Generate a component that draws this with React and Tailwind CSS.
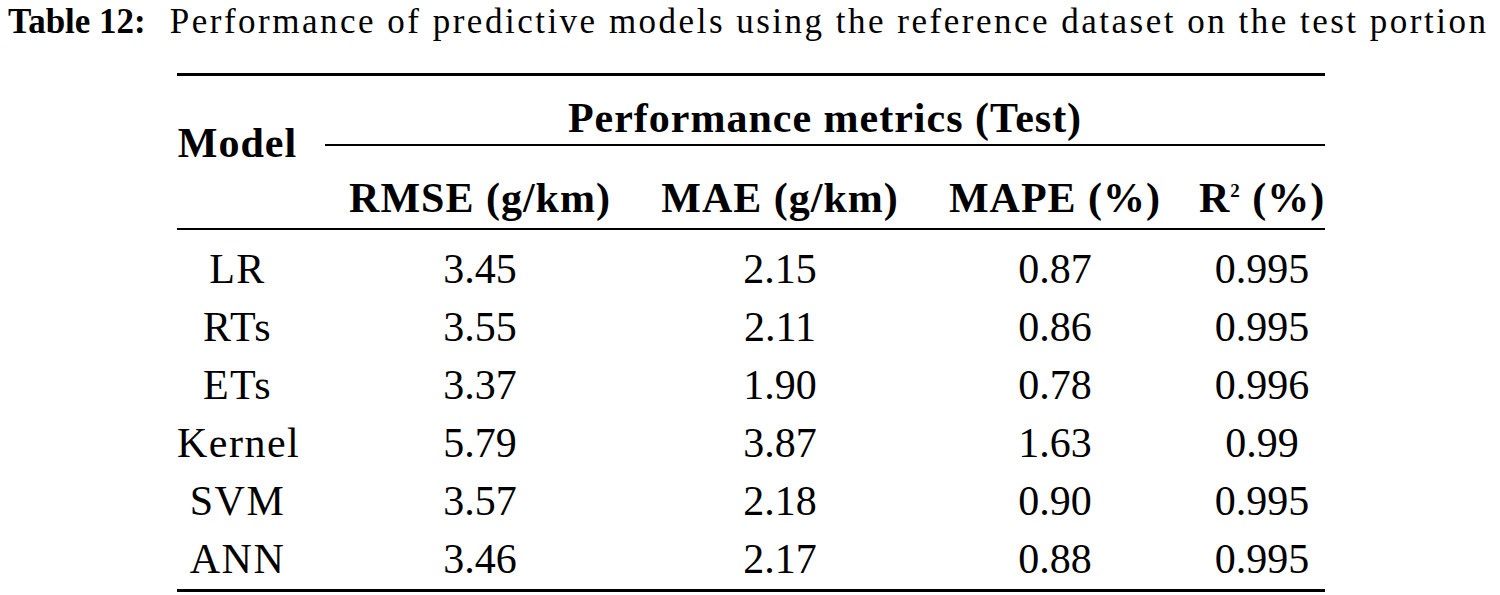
const rows = [
  ["LR", "3.45", "2.15", "0.87", "0.995"],
  ["RTs", "3.55", "2.11", "0.86", "0.995"],
  ["ETs", "3.37", "1.90", "0.78", "0.996"],
  ["Kernel", "5.79", "3.87", "1.63", "0.99"],
  ["SVM", "3.57", "2.18", "0.90", "0.995"],
  ["ANN", "3.46", "2.17", "0.88", "0.995"],
];

const cols = "grid grid-cols-[148px_310px_290px_260px_140px]";

export default function App() {
  return (
    <div className="w-[1500px] h-[595px] bg-white text-black font-['Liberation_Serif',serif] overflow-hidden">
      <div className="flex items-center h-[44px] pl-[8px] text-[35px] leading-[44px]">
        <span className="font-bold">Table 12:</span>
        <span className="ml-[24px] tracking-[2.5px] whitespace-nowrap">
          Performance of predictive models using the reference dataset on the test portion
        </span>
      </div>

      <div className="ml-[177px] mt-[29px] w-[1148px] text-[42px]">
        <div className="border-t-[3px] border-black" />

        <div className={`${cols} font-bold tracking-[1px] whitespace-nowrap`}>
          <div className="row-span-2 flex items-center justify-center pr-[27px] pb-[18px]">
            Model
          </div>
          <div className="col-span-4 h-[70px] pt-[14px] leading-[56px] text-center border-b-2 border-black">
            Performance metrics (Test)
          </div>
          <div className="h-[82px] pt-[24px] leading-[56px] text-center">RMSE (g/km)</div>
          <div className="h-[82px] pt-[24px] leading-[56px] text-center">MAE (g/km)</div>
          <div className="h-[82px] pt-[24px] leading-[56px] text-center">MAPE (%)</div>
          <div className="h-[82px] pt-[24px] leading-[56px] text-center pl-[14px]">
            R<span className="text-[19px] leading-none align-[15px]">2</span> (%)
          </div>
        </div>

        <div className="border-t-2 border-black" />

        <div className="pt-[10px] pb-[1px]">
          {rows.map((r) => (
            <div key={r[0]} className={`${cols} h-[58px] leading-[58px] text-center`}>
              <div className="pr-[27px] tracking-[1.5px]">{r[0]}</div>
              <div>{r[1]}</div>
              <div>{r[2]}</div>
              <div>{r[3]}</div>
              <div className="pl-[14px]">{r[4]}</div>
            </div>
          ))}
        </div>

        <div className="border-t-[3px] border-black" />
      </div>
    </div>
  );
}
